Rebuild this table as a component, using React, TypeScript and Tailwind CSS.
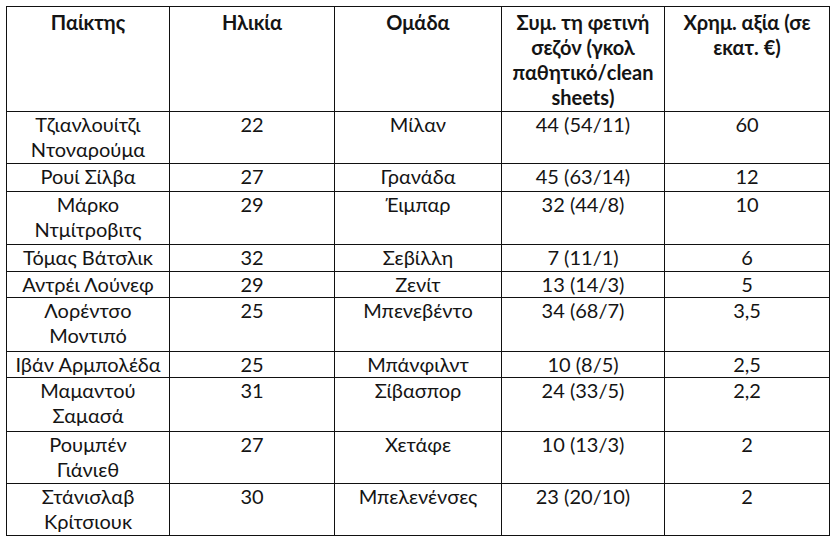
const rows = [
  { name: ["Τζιανλουίτζι", "Ντοναρούμα"], age: "22", team: "Μίλαν", stats: "44 (54/11)", value: "60", h: "h-[52px]" },
  { name: ["Ρουί Σίλβα"], age: "27", team: "Γρανάδα", stats: "45 (63/14)", value: "12", h: "h-[28px]" },
  { name: ["Μάρκο", "Ντμίτροβιτς"], age: "29", team: "Έιμπαρ", stats: "32 (44/8)", value: "10", h: "h-[53px]" },
  { name: ["Τόμας Βάτσλικ"], age: "32", team: "Σεβίλλη", stats: "7 (11/1)", value: "6", h: "h-[27px]" },
  { name: ["Αντρέι Λούνεφ"], age: "29", team: "Ζενίτ", stats: "13 (14/3)", value: "5", h: "h-[26px]" },
  { name: ["Λορέντσο", "Μοντιπό"], age: "25", team: "Μπενεβέντο", stats: "34 (68/7)", value: "3,5", h: "h-[54px]" },
  { name: ["Ιβάν Αρμπολέδα"], age: "25", team: "Μπάνφιλντ", stats: "10 (8/5)", value: "2,5", h: "h-[26px]" },
  { name: ["Μαμαντού", "Σαμασά"], age: "31", team: "Σίβασπορ", stats: "24 (33/5)", value: "2,2", h: "h-[54px]" },
  { name: ["Ρουμπέν", "Γιάνιεθ"], age: "27", team: "Χετάφε", stats: "10 (13/3)", value: "2", h: "h-[52px]" },
  { name: ["Στάνισλαβ", "Κρίτσιουκ"], age: "30", team: "Μπελενένσες", stats: "23 (20/10)", value: "2", h: "h-[52px]" },
];

const cell = "border border-[#111] align-top text-center p-0";

export default function App() {
  return (
    <div className="min-h-screen bg-white pt-[6px] pl-[6px] text-[#141414] font-['Lato','Noto_Sans',sans-serif] text-[20px] leading-[25px]">
      <table className="table-fixed border-collapse w-[823px]">
        <colgroup>
          <col className="w-[163px]" />
          <col className="w-[165px]" />
          <col className="w-[167px]" />
          <col className="w-[163px]" />
          <col className="w-[165px]" />
        </colgroup>
        <thead>
          <tr className="h-[105px] font-bold">
            <th className={`${cell} pt-[3px]`}>Παίκτης</th>
            <th className={`${cell} pt-[3px]`}>Ηλικία</th>
            <th className={`${cell} pt-[3px]`}>Ομάδα</th>
            <th className={`${cell} pt-[3px]`}>
              Συμ. τη φετινή
              <br />
              σεζόν (γκολ
              <br />
              παθητικό/clean
              <br />
              sheets)
            </th>
            <th className={`${cell} pt-[3px]`}>
              Χρημ. αξία (σε
              <br />
              εκατ. €)
            </th>
          </tr>
        </thead>
        <tbody>
          {rows.map((r) => (
            <tr key={r.name.join(" ")} className={r.h}>
              <td className={cell}>
                {r.name.map((n) => (
                  <div key={n}>{n}</div>
                ))}
              </td>
              <td className={cell}>{r.age}</td>
              <td className={cell}>{r.team}</td>
              <td className={cell}>{r.stats}</td>
              <td className={cell}>{r.value}</td>
            </tr>
          ))}
        </tbody>
      </table>
    </div>
  );
}
